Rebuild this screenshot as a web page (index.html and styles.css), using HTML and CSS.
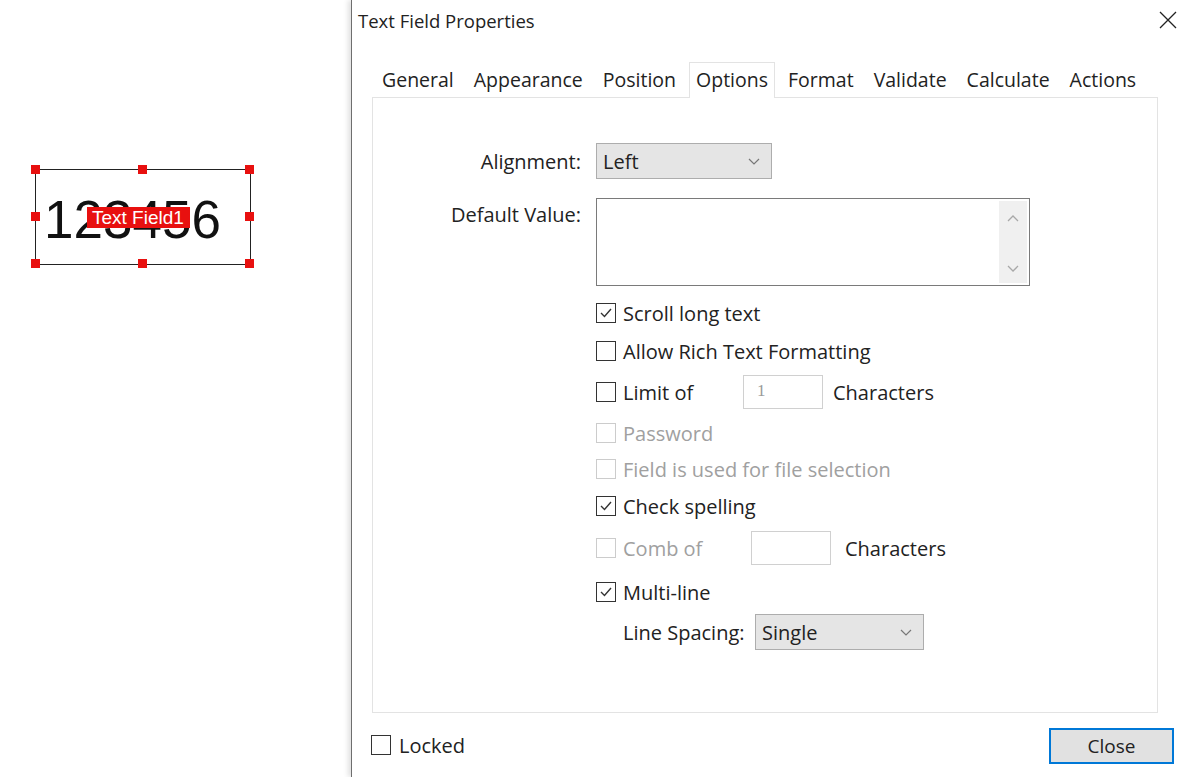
FILE: index.html
```html
<!DOCTYPE html>
<html lang="en">
<head>
  <meta charset="UTF-8" />
  <title>Text Field Properties</title>
  <link rel="stylesheet" href="styles.css">
</head>
<body>
  <div class="canvas">
    <div class="field-widget">
      <span class="field-value">123456</span>
      <span class="field-name">Text Field1</span>
      <i class="handle h-tl"></i><i class="handle h-tm"></i><i class="handle h-tr"></i>
      <i class="handle h-ml"></i><i class="handle h-mr"></i>
      <i class="handle h-bl"></i><i class="handle h-bm"></i><i class="handle h-br"></i>
    </div>
  </div>

  <div class="dialog">
    <div class="title-bar">
      <span class="title">Text Field Properties</span>
      <svg class="close-x" width="18" height="18" viewBox="0 0 18 18">
        <path d="M1 1 L17 17 M17 1 L1 17" stroke="#222" stroke-width="1.3" fill="none"/>
      </svg>
    </div>

    <div class="tabs">
      <span class="tab">General</span>
      <span class="tab">Appearance</span>
      <span class="tab">Position</span>
      <span class="tab active">Options</span>
      <span class="tab">Format</span>
      <span class="tab">Validate</span>
      <span class="tab">Calculate</span>
      <span class="tab">Actions</span>
    </div>

    <div class="panel">
      <div class="form-row">
        <label class="form-label">Alignment:</label>
        <div class="select align-select">
          <span>Left</span>
          <svg class="chev" width="12" height="7" viewBox="0 0 12 7"><path d="M1 1 L6 6 L11 1" stroke="#777" stroke-width="1.2" fill="none"/></svg>
        </div>
      </div>

      <div class="form-row top">
        <label class="form-label default-label">Default Value:</label>
        <div class="textarea">
          <div class="scrollbar">
            <svg width="12" height="7" viewBox="0 0 12 7"><path d="M1 6 L6 1 L11 6" stroke="#a8a8a8" stroke-width="1.3" fill="none"/></svg>
            <svg width="12" height="7" viewBox="0 0 12 7"><path d="M1 1 L6 6 L11 1" stroke="#a8a8a8" stroke-width="1.3" fill="none"/></svg>
          </div>
        </div>
      </div>

      <div class="checks">
        <div class="check-row">
          <span class="box"><svg width="16" height="16" viewBox="0 0 16 16"><path d="M3 8 L6.5 11.5 L13 4" stroke="#333" stroke-width="1.4" fill="none"/></svg></span>
          <span>Scroll long text</span>
        </div>
        <div class="check-row">
          <span class="box"></span>
          <span>Allow Rich Text Formatting</span>
        </div>
        <div class="check-row tall">
          <span class="box"></span>
          <span class="limit-label">Limit of</span>
          <span class="num-input limit-input">1</span>
          <span class="chars">Characters</span>
        </div>
        <div class="check-row disabled">
          <span class="box"></span>
          <span>Password</span>
        </div>
        <div class="check-row disabled short">
          <span class="box"></span>
          <span>Field is used for file selection</span>
        </div>
        <div class="check-row mid">
          <span class="box"><svg width="16" height="16" viewBox="0 0 16 16"><path d="M3 8 L6.5 11.5 L13 4" stroke="#333" stroke-width="1.4" fill="none"/></svg></span>
          <span>Check spelling</span>
        </div>
        <div class="check-row tall">
          <span class="box off"></span>
          <span class="comb-label">Comb of</span>
          <span class="num-input comb-input"></span>
          <span class="chars comb-chars">Characters</span>
        </div>
        <div class="check-row tall">
          <span class="box"><svg width="16" height="16" viewBox="0 0 16 16"><path d="M3 8 L6.5 11.5 L13 4" stroke="#333" stroke-width="1.4" fill="none"/></svg></span>
          <span>Multi-line</span>
        </div>
        <div class="check-row spacing-row">
          <span class="spacing-label">Line Spacing:</span>
          <div class="select spacing-select">
            <span>Single</span>
            <svg class="chev" width="12" height="7" viewBox="0 0 12 7"><path d="M1 1 L6 6 L11 1" stroke="#777" stroke-width="1.2" fill="none"/></svg>
          </div>
        </div>
      </div>
    </div>

    <div class="footer">
      <div class="check-row locked">
        <span class="box"></span>
        <span>Locked</span>
      </div>
      <button class="close-button">Close</button>
    </div>
  </div>
</body>
</html>
```

FILE: styles.css
```css
body {
  margin: 0;
  height: 777px;
  display: flex;
  background-color: white;
  font-family: "Open Sans", "Noto Sans", sans-serif;
  font-size: 20px;
  color: #222;
  overflow: hidden;
}
.canvas {
  width: 351px;
  flex-shrink: 0;
  padding: 169px 0 0 35px;
  box-sizing: border-box;
}
.field-widget {
  position: relative;
  width: 216px;
  height: 96px;
  border: 1.5px solid #222;
  box-sizing: border-box;
}
.field-value {
  display: block;
  font-family: "Liberation Sans", Arial, sans-serif;
  font-size: 53px;
  line-height: 54px;
  padding: 23px 0 0 8px;
  color: #111;
}
.field-name {
  position: absolute;
  left: 51px;
  top: 37px;
  background-color: #e8100f;
  color: white;
  font-family: "Liberation Sans", Arial, sans-serif;
  font-size: 19px;
  line-height: 21px;
  padding: 0 6px 0 5px;
}
.handle {
  position: absolute;
  width: 9px;
  height: 9px;
  background-color: #e8100f;
  margin: -5px 0 0 -5px;
}
.h-tl { left: 0; top: 0; }
.h-tm { left: 50%; top: 0; }
.h-tr { left: 100%; top: 0; }
.h-ml { left: 0; top: 50%; }
.h-mr { left: 100%; top: 50%; }
.h-bl { left: 0; top: 100%; }
.h-bm { left: 50%; top: 100%; }
.h-br { left: 100%; top: 100%; }

.dialog {
  flex: 1;
  min-width: 0;
  display: flex;
  flex-direction: column;
  border-left: 1px solid #6e6e6e;
  box-shadow: -3px 0 5px rgba(0, 0, 0, 0.12);
  padding: 0 39px 0 20px;
}
.title-bar {
  height: 40px;
  display: flex;
  align-items: center;
  justify-content: space-between;
  margin: 0 -19px 0 -14px;
}
.title {
  font-size: 18.5px;
}
.tabs {
  display: flex;
  margin-top: 22px;
  height: 35px;
  align-items: flex-end;
  font-size: 19.5px;
}
.tab {
  padding: 0 9px;
  height: 35px;
  line-height: 33px;
  box-sizing: border-box;
  border: 1px solid transparent;
  border-bottom: none;
  white-space: nowrap;
}
.tab.active {
  border-color: #e3e3e3;
  background-color: white;
  margin: 0 3px -1px;
  padding: 0 6px;
  height: 36px;
  position: relative;
}
.panel {
  height: 616px;
  border: 1px solid #e3e3e3;
  box-sizing: border-box;
  padding-top: 45px;
}
.form-row {
  display: flex;
  align-items: center;
  gap: 15px;
  margin-bottom: 19px;
}
.form-row.top {
  align-items: flex-start;
  margin-bottom: 8px;
}
.form-label {
  width: 208px;
  text-align: right;
}
.default-label {
  padding-top: 3px;
}
.select {
  height: 36px;
  display: flex;
  align-items: center;
  justify-content: space-between;
  padding: 0 11px 0 6px;
  background-color: #e5e5e5;
  border: 1px solid #adadad;
  box-sizing: border-box;
}
.align-select {
  width: 176px;
}
.textarea {
  width: 434px;
  height: 88px;
  border: 1px solid #7a7a7a;
  box-sizing: border-box;
  display: flex;
  justify-content: flex-end;
  padding: 2px;
}
.scrollbar {
  width: 28px;
  background-color: #f0f0f0;
  display: flex;
  flex-direction: column;
  align-items: center;
  justify-content: space-between;
  padding: 14px 0 11px;
}
.checks {
  padding-left: 223px;
}
.check-row {
  height: 38px;
  display: flex;
  align-items: center;
  white-space: nowrap;
}
.check-row.short {
  height: 34px;
}
.check-row.mid {
  height: 40px;
}
.check-row.tall {
  height: 44px;
}
.box {
  width: 20px;
  height: 20px;
  border: 1px solid #333;
  box-sizing: border-box;
  margin-right: 7px;
  display: flex;
  align-items: center;
  justify-content: center;
  flex-shrink: 0;
}
.disabled {
  color: #a0a0a0;
}
.disabled .box,
.box.off {
  border-color: #cccccc;
}
.limit-label {
  width: 120px;
}
.comb-label {
  width: 128px;
  color: #a0a0a0;
}
.num-input {
  height: 34px;
  width: 80px;
  border: 1px solid #d0d0d0;
  box-sizing: border-box;
  color: #9a9a9a;
  font-family: "Liberation Serif", serif;
  font-size: 17px;
  padding: 5px 0 0 13px;
}
.chars {
  margin-left: 10px;
}
.comb-chars {
  margin-left: 14px;
}
.spacing-row {
  padding-left: 27px;
  height: 36px;
}
.spacing-label {
  width: 132px;
}
.spacing-select {
  width: 169px;
}
.footer {
  flex: 1;
  display: flex;
  align-items: center;
  justify-content: space-between;
  margin: 0 -16px 0 -1px;
}
.locked .box {
  margin-right: 8px;
}
.close-button {
  width: 125px;
  height: 36px;
  margin-top: 2px;
  border: 2px solid #0078d7;
  background-color: #e1e1e1;
  font-family: "Open Sans", "Noto Sans", sans-serif;
  font-size: 19px;
  color: #222;
}
```
